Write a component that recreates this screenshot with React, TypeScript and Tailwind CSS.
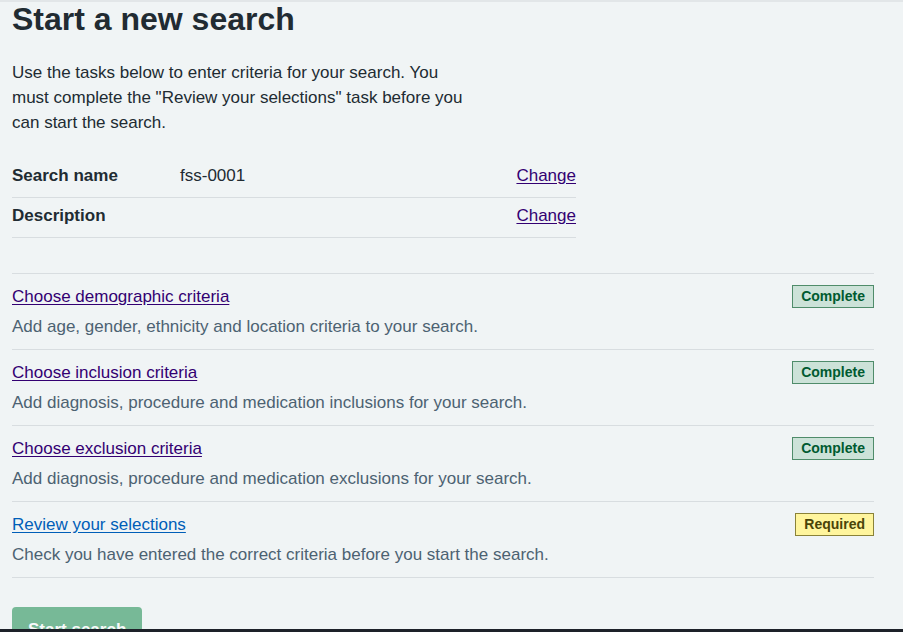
type Task = {
  title: string;
  description: string;
  status: 'Complete' | 'Required';
  visited: boolean;
};

const tasks: Task[] = [
  {
    title: 'Choose demographic criteria',
    description: 'Add age, gender, ethnicity and location criteria to your search.',
    status: 'Complete',
    visited: true,
  },
  {
    title: 'Choose inclusion criteria',
    description: 'Add diagnosis, procedure and medication inclusions for your search.',
    status: 'Complete',
    visited: true,
  },
  {
    title: 'Choose exclusion criteria',
    description: 'Add diagnosis, procedure and medication exclusions for your search.',
    status: 'Complete',
    visited: true,
  },
  {
    title: 'Review your selections',
    description: 'Check you have entered the correct criteria before you start the search.',
    status: 'Required',
    visited: false,
  },
];

function Tag({ status }: { status: Task['status'] }) {
  if (status === 'Complete') {
    return (
      <span className="mt-[1px] shrink-0 border border-[#4f8c6a] bg-[#cce2d8] px-2 py-[2px] text-[14px] font-bold leading-[17px] text-[#005a30]">
        Complete
      </span>
    );
  }
  return (
    <span className="mt-[1px] shrink-0 border border-[#8a8238] bg-[#fff59d] px-2 py-[2px] text-[14px] font-bold leading-[17px] text-[#4a4408]">
      Required
    </span>
  );
}

export default function App() {
  return (
    <div className="h-[632px] overflow-hidden border-t-2 border-b-[3px] border-t-[#e2e6e8] border-b-[#1d2129] bg-[#f0f4f5] font-['Liberation_Sans',Arial,sans-serif] text-[#212b32]">
      <div className="w-[874px] pl-3">
        <h1 className="text-[32px] font-bold leading-[34px]">Start a new search</h1>

        <p className="mt-6 max-w-[460px] text-[17px] leading-[25px]">
          Use the tasks below to enter criteria for your search. You must complete the "Review your selections" task
          before you can start the search.
        </p>

        <dl className="mt-[23px] w-[564px] text-[17px] leading-[25px]">
          <div className="flex border-b border-[#d8dde0] pb-[9px] pt-[5px]">
            <dt className="w-[168px] font-bold">Search name</dt>
            <dd className="flex-1">fss-0001</dd>
            <dd>
              <a href="#" className="text-[#330072] underline underline-offset-2">
                Change
              </a>
            </dd>
          </div>
          <div className="flex border-b border-[#d8dde0] pb-[9px] pt-[5px]">
            <dt className="w-[168px] font-bold">Description</dt>
            <dd className="flex-1"></dd>
            <dd>
              <a href="#" className="text-[#330072] underline underline-offset-2">
                Change
              </a>
            </dd>
          </div>
        </dl>

        <ul className="mt-[35px] border-t border-[#d8dde0] text-[17px] leading-[25px]">
          {tasks.map((task) => (
            <li key={task.title} className="flex items-start justify-between border-b border-[#d8dde0] pb-[10px] pt-[10px]">
              <div>
                <a
                  href="#"
                  className={`underline underline-offset-2 ${task.visited ? 'text-[#330072]' : 'text-[#005eb8]'}`}
                >
                  {task.title}
                </a>
                <p className="mt-[5px] text-[#4c6272]">{task.description}</p>
              </div>
              <Tag status={task.status} />
            </li>
          ))}
        </ul>

        <button
          disabled
          className="mt-[29px] rounded-[4px] bg-[#007f3b] px-4 pb-3 pt-[10px] text-[17px] font-bold leading-[25px] text-white opacity-50"
        >
          Start search
        </button>
      </div>
    </div>
  );
}
